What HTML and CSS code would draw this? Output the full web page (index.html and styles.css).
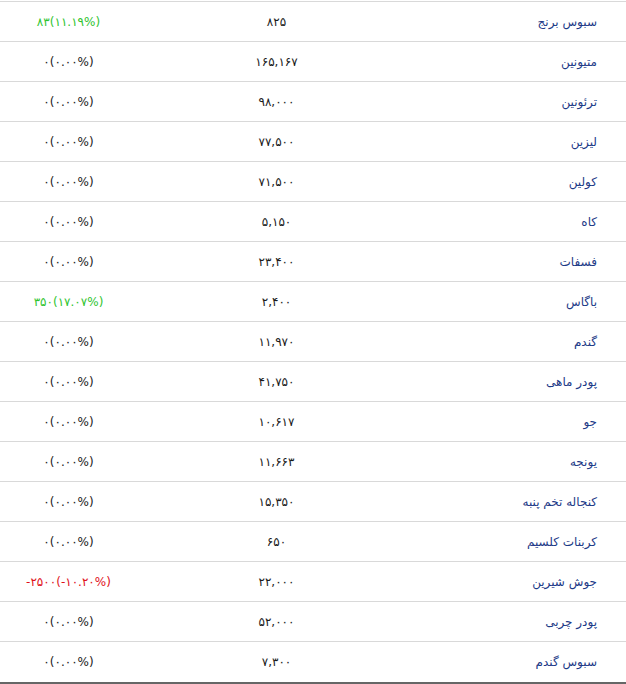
FILE: index.html
```html
<!DOCTYPE html>
<html lang="fa" dir="rtl">
<head>
<meta charset="utf-8">
<title>قیمت نهاده‌ها</title>
<link rel="stylesheet" href="styles.css">
</head>
<body>
<div class="table">
  <div class="row"><div class="name">سبوس برنج</div><div class="price">۸۲۵</div><div class="change up"><bdi>۸۳(۱۱.۱۹%)</bdi></div></div>
  <div class="row"><div class="name">متیونین</div><div class="price">۱۶۵,۱۶۷</div><div class="change"><bdi>۰(۰.۰۰%)</bdi></div></div>
  <div class="row"><div class="name">ترئونین</div><div class="price">۹۸,۰۰۰</div><div class="change"><bdi>۰(۰.۰۰%)</bdi></div></div>
  <div class="row"><div class="name">لیزین</div><div class="price">۷۷,۵۰۰</div><div class="change"><bdi>۰(۰.۰۰%)</bdi></div></div>
  <div class="row"><div class="name">کولین</div><div class="price">۷۱,۵۰۰</div><div class="change"><bdi>۰(۰.۰۰%)</bdi></div></div>
  <div class="row"><div class="name">کاه</div><div class="price">۵,۱۵۰</div><div class="change"><bdi>۰(۰.۰۰%)</bdi></div></div>
  <div class="row"><div class="name">فسفات</div><div class="price">۲۳,۴۰۰</div><div class="change"><bdi>۰(۰.۰۰%)</bdi></div></div>
  <div class="row"><div class="name">باگاس</div><div class="price">۲,۴۰۰</div><div class="change up"><bdi>۳۵۰(۱۷.۰۷%)</bdi></div></div>
  <div class="row"><div class="name">گندم</div><div class="price">۱۱,۹۷۰</div><div class="change"><bdi>۰(۰.۰۰%)</bdi></div></div>
  <div class="row"><div class="name">پودر ماهی</div><div class="price">۴۱,۷۵۰</div><div class="change"><bdi>۰(۰.۰۰%)</bdi></div></div>
  <div class="row"><div class="name">جو</div><div class="price">۱۰,۶۱۷</div><div class="change"><bdi>۰(۰.۰۰%)</bdi></div></div>
  <div class="row"><div class="name">یونجه</div><div class="price">۱۱,۶۶۳</div><div class="change"><bdi>۰(۰.۰۰%)</bdi></div></div>
  <div class="row"><div class="name">کنجاله تخم پنبه</div><div class="price">۱۵,۳۵۰</div><div class="change"><bdi>۰(۰.۰۰%)</bdi></div></div>
  <div class="row"><div class="name">کربنات کلسیم</div><div class="price">۶۵۰</div><div class="change"><bdi>۰(۰.۰۰%)</bdi></div></div>
  <div class="row"><div class="name">جوش شیرین</div><div class="price">۲۲,۰۰۰</div><div class="change down"><bdi>-۲۵۰۰(-۱۰.۲۰%)</bdi></div></div>
  <div class="row"><div class="name">پودر چربی</div><div class="price">۵۲,۰۰۰</div><div class="change"><bdi>۰(۰.۰۰%)</bdi></div></div>
  <div class="row last"><div class="name">سبوس گندم</div><div class="price">۷,۳۰۰</div><div class="change"><bdi>۰(۰.۰۰%)</bdi></div></div>
</div>
</body>
</html>
```
FILE: styles.css
```css
html, body {
  margin: 0;
  padding: 0;
  background: #ffffff;
}
body {
  padding-top: 1px;
  font-family: "DejaVu Sans", sans-serif;
  font-size: 12px;
}
.table {
  direction: rtl;
  width: 626px;
  border-bottom: 2px solid #666666;
}
.row {
  display: grid;
  grid-template-columns: 210px 279px 137px;
  height: 39px;
  align-items: center;
  border-top: 1px solid #d9d9d9;
}
.row.last {
  height: 40px;
}
.name {
  text-align: right;
  padding-right: 29px;
  color: #1d3a87;
}
.price {
  text-align: center;
  color: #1a1a1a;
  letter-spacing: 1px;
}
.change {
  text-align: center;
  color: #1a1a1a;
  letter-spacing: 1px;
}
.change bdi {
  direction: ltr;
  unicode-bidi: isolate;
}
.change.up {
  color: #2fc42f;
}
.change.down {
  color: #e0101a;
}
```
